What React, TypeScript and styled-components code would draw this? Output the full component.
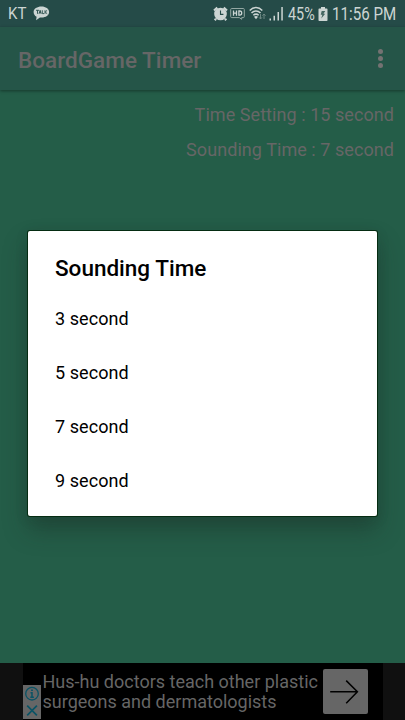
import React from "react";
import styled, { createGlobalStyle } from "styled-components";

const GlobalStyle = createGlobalStyle`
  * { box-sizing: border-box; }
  body { margin: 0; background: #245d48; font-family: Roboto, "Liberation Sans", sans-serif; }
`;

const Screen = styled.div`
  position: relative;
  display: flex;
  flex-direction: column;
  width: 405px;
  height: 720px;
  overflow: hidden;
  background: #245d48;
`;

const StatusBar = styled.header`
  display: flex;
  flex: none;
  align-items: center;
  justify-content: space-between;
  height: 27px;
  padding: 0 9px 0 8px;
  background: #254b48;
  color: #ccd5d3;
`;

const StatusGroup = styled.div`
  display: flex;
  align-items: center;
  height: 27px;
  svg { display: block; flex: none; }
`;

const StatusText = styled.span<{ $width: number; $squeeze: number; $size?: number }>`
  display: block;
  width: ${(p) => p.$width}px;
  font-size: ${(p) => p.$size ?? 18}px;
  line-height: 27px;
  white-space: nowrap;
  transform: scaleX(${(p) => p.$squeeze});
  transform-origin: left center;
`;

const Gap = styled.span<{ $width: number }>`
  flex: none;
  width: ${(p) => p.$width}px;
`;

const AppBar = styled.div`
  position: relative;
  display: flex;
  flex: none;
  align-items: center;
  justify-content: space-between;
  height: 63px;
  padding: 2px 22px 0 18px;
  background: #255548;
  box-shadow: 0 1px 3px rgba(0, 0, 0, 0.4);
`;

const AppTitle = styled.h1`
  margin: 0;
  font-size: 22.5px;
  line-height: 28px;
  font-weight: 500;
  letter-spacing: 0.04px;
  color: #666;
  white-space: nowrap;
`;

const MenuButton = styled.button`
  display: grid;
  gap: 2px;
  padding: 0;
  margin-bottom: 3px;
  border: 0;
  background: none;
`;

const MenuDot = styled.i`
  width: 5px;
  height: 5px;
  border-radius: 50%;
  background: #747272;
`;

const Settings = styled.main`
  display: flex;
  flex: 1;
  flex-direction: column;
  align-items: flex-end;
  padding: 7px 11px 0 0;
`;

const SettingLine = styled.p`
  margin: 0;
  height: 35px;
  font-size: 18px;
  line-height: 35px;
  letter-spacing: 0.06px;
  color: #666;
  white-space: nowrap;
`;

const Dialog = styled.section`
  position: absolute;
  left: 28px;
  top: 231px;
  width: 349px;
  height: 285px;
  border-radius: 2px;
  background: #fff;
  color: #000;
  box-shadow: 0 0 0 1px #052c12, 0 14px 24px rgba(25, 35, 30, 0.36), 0 3px 14px rgba(25, 35, 30, 0.12);
`;

const DialogTitle = styled.h2`
  margin: 0;
  height: 60px;
  padding: 7px 27px 0;
  font-size: 22.5px;
  line-height: 60px;
  font-weight: 500;
`;

const Options = styled.ul`
  margin: 0;
  padding: 1px 0 0;
  list-style: none;
`;

const Option = styled.li`
  height: 54px;
  padding: 0 27px;
  font-size: 18px;
  letter-spacing: 0.06px;
  line-height: 54px;
`;

const AdStrip = styled.footer`
  display: flex;
  flex: none;
  justify-content: center;
  height: 57px;
  background: #101010;
`;

const AdBanner = styled.div`
  display: flex;
  width: 360px;
  background: #000;
`;

const AdBadge = styled.div`
  flex: none;
  align-self: flex-end;
  width: 18px;
  height: 34px;
  margin-bottom: 1px;
  background: #666;
  svg { display: block; }
`;

const AdText = styled.p`
  flex: 1;
  margin: 0;
  padding: 9px 0 0 2px;
  font-size: 18px;
  line-height: 20px;
  color: #666;
  white-space: nowrap;
`;

const AdButton = styled.button`
  flex: none;
  width: 45px;
  height: 45px;
  margin: 6px 15px 0 0;
  padding: 0;
  border: 0;
  border-radius: 2px;
  background: #666;
  svg { display: block; }
`;

const TalkIcon = () => (
  <svg width="17" height="17" viewBox="0 0 17 17">
    <path d="M8.500 1.500C4.200 1.500.6 3.800.6 7c0 2.100 1.200 3.800 3 4.700l-.5 3.600 3.800-2.900c5 .7 9.200-1.700 9.200-5.400 0-3.200-3.400-5.500-7.600-5.500Z" fill="#ccd5d3" />
    <path d="M3 5.300h3M4.500 5.300v3.500M6 8.800l1.100-3.500 1.100 3.500M6.400 7.700h1.500M9.300 5.300v3.300h1.800M12 5.300v3.500M14.100 5.300 12.300 7l1.900 1.800" fill="none" stroke="#254b48" strokeWidth="0.9" />
  </svg>
);

const AlarmIcon = () => (
  <svg width="15" height="16" viewBox="0 0 15 16">
    <path d="M1 4.500 4.300 1.700M14 4.500l-3.300-2.800M3 12.700l-1.200 1.500M12 12.700l1.200 1.500" stroke="#ccd5d3" strokeWidth="2.200" />
    <circle cx="7.500" cy="8" r="6.300" fill="#ccd5d3" />
    <path d="M7.500 4.600v3.800h2.900" fill="none" stroke="#254b48" strokeWidth="1.100" />
  </svg>
);

const HdIcon = () => (
  <svg width="15" height="14" viewBox="0 0 15 14">
    <path d="M1.700 1.500h11.600q1 0 1 1v7.100q0 1-1 1h-1.600v1.700l-2.400-1.700H1.700q-1 0-1-1V2.500q0-1 1-1Z" fill="none" stroke="#94a8a3" />
    <path d="M3.500 3.400v5.400M6.500 3.400v5.400M3.500 6.100h3M8.900 4h1c2.400 0 2.400 4.200 0 4.200h-1Z" fill="none" stroke="#ccd5d3" strokeWidth="1.300" />
  </svg>
);

const WifiIcon = () => (
  <svg width="18" height="15" viewBox="0 0 18 15">
    <g fill="none" stroke="#ccd5d3" strokeWidth="1.500">
      <path d="M.7 4.400C4.400.5 9.600.5 13.300 4.400" />
      <path d="M2.500 7C5.200 4.200 8.800 4.200 11.500 7" />
      <path d="M4.300 9.300Q7 7 9.700 9.300" />
    </g>
    <path d="M5 10.800q2-1.500 4 0l-2 2.400Z" fill="#ccd5d3" />
    <path d="M11.500 8v5m-1.500-1.700 1.500 1.700 1.500-1.700M15 13V8m-1.500 1.700L15 8l1.500 1.700" fill="none" stroke="#6c8782" />
  </svg>
);

const SignalIcon = () => (
  <svg width="15" height="14" viewBox="0 0 15 14" fill="#ccd5d3">
    <path d="M.5 11.500H2V13.500H.5zM4.500 8.800H6v4.700H4.500zM8.500 5H10v8.500H8.500zM12.300 0h1.500v13.500h-1.500z" />
  </svg>
);

const BatteryIcon = () => (
  <svg width="10" height="14" viewBox="0 0 10 14">
    <path d="M3 0h4v1.500h1.800q.7 0 .7.700v11q0 .8-.8.800H1.300q-.8 0-.8-.8v-11q0-.7.7-.7H3Z" fill="#ccd5d3" />
    <path d="M3.700 4h3.600L5.500 6.800h1.700L3.300 11.500l1-3.700H2.700Z" fill="#456762" />
  </svg>
);

const BadgeIcons = () => (
  <svg width="18" height="34" viewBox="0 0 18 34" fill="none" stroke="#0a5365">
    <circle cx="9" cy="8.700" r="6.300" strokeWidth="1.300" />
    <path d="M7.500 7.700H9v4.300M7.300 12.200h3.600" strokeWidth="1.500" />
    <path d="M9 4.500v1.600" strokeWidth="1.800" />
    <path d="m4.200 20.700 9.700 9.700M13.900 20.700l-9.700 9.700" strokeWidth="1.700" />
  </svg>
);

const ArrowIcon = () => (
  <svg width="45" height="45" viewBox="0 0 45 45">
    <path d="M7.200 22.800h27M23.200 11.600l11.200 11.200-11.200 11.500" fill="none" stroke="#000" strokeWidth="1.500" />
  </svg>
);

const options = ["3 second", "5 second", "7 second", "9 second"];

export default function App() {
  return (
    <>
      <GlobalStyle />
      <Screen>
        <StatusBar>
          <StatusGroup>
            <StatusText $width={25} $squeeze={0.91} $size={16.5}>KT</StatusText>
            <TalkIcon />
          </StatusGroup>
          <StatusGroup>
            <AlarmIcon />
            <Gap $width={2} />
            <HdIcon />
            <Gap $width={4} />
            <WifiIcon />
            <Gap $width={2} />
            <SignalIcon />
            <Gap $width={4} />
            <StatusText $width={30} $squeeze={0.8}>45%</StatusText>
            <BatteryIcon />
            <Gap $width={4} />
            <StatusText $width={64} $squeeze={0.84}>11:56 PM</StatusText>
          </StatusGroup>
        </StatusBar>
        <AppBar>
          <AppTitle>BoardGame Timer</AppTitle>
          <MenuButton aria-label="More options">
            <MenuDot /><MenuDot /><MenuDot />
          </MenuButton>
        </AppBar>
        <Settings>
          <SettingLine>Time Setting : 15 second</SettingLine>
          <SettingLine>Sounding Time : 7 second</SettingLine>
        </Settings>
        <AdStrip>
          <AdBanner>
            <AdBadge><BadgeIcons /></AdBadge>
            <AdText>Hus-hu doctors teach other plastic<br />surgeons and dermatologists</AdText>
            <AdButton aria-label="Open"><ArrowIcon /></AdButton>
          </AdBanner>
        </AdStrip>
        <Dialog role="dialog" aria-label="Sounding Time">
          <DialogTitle>Sounding Time</DialogTitle>
          <Options>
            {options.map((label) => <Option key={label}>{label}</Option>)}
          </Options>
        </Dialog>
      </Screen>
    </>
  );
}
